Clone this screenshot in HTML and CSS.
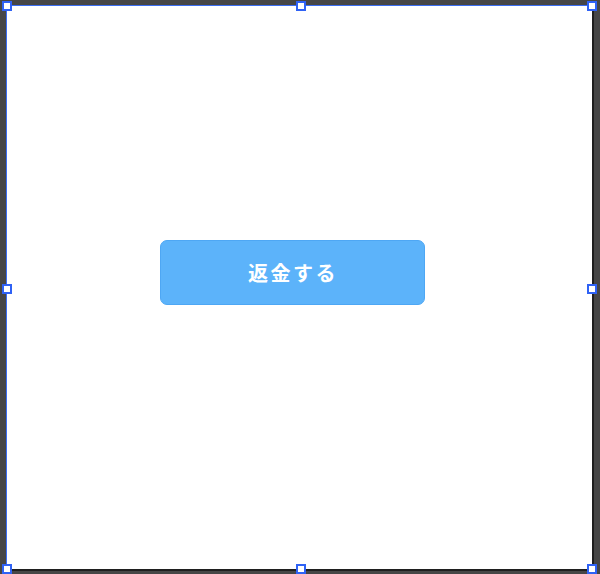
FILE: index.html
```html
<!DOCTYPE html>
<html lang="ja">
<head>
<meta charset="utf-8">
<title>返金する</title>
<link rel="stylesheet" href="styles.css">
</head>
<body>
<div class="stage">
  <div class="canvas">
    <button class="refund-btn" type="button">返金する</button>
    <span class="handle h-tl"></span>
    <span class="handle h-tm"></span>
    <span class="handle h-tr"></span>
    <span class="handle h-ml"></span>
    <span class="handle h-mr"></span>
    <span class="handle h-bl"></span>
    <span class="handle h-bm"></span>
    <span class="handle h-br"></span>
  </div>
</div>
</body>
</html>
```

FILE: styles.css
```css
html, body {
  margin: 0;
  padding: 0;
  background: #464646;
  width: 600px;
  height: 574px;
  overflow: hidden;
}

.stage {
  padding: 5px 0 0 6px;
}

.canvas {
  position: relative;
  box-sizing: border-box;
  width: 586px;
  height: 564px;
  background: #ffffff;
  border-left: 1px solid #3a6df2;
  border-top: 1px solid #3a6df2;
  box-shadow: 2px 2px 0 #1f1f1f;
  padding: 234px 0 0 153px;
}

.refund-btn {
  box-sizing: border-box;
  display: flex;
  align-items: center;
  justify-content: center;
  width: 265px;
  height: 65px;
  margin: 0;
  padding: 0 0 0 1px;
  background: #5cb3fa;
  border: 1px solid #4ea7f4;
  border-radius: 7px;
  color: #ffffff;
  font-family: "Noto Sans CJK JP", "Noto Sans", sans-serif;
  font-size: 20px;
  font-weight: 700;
  letter-spacing: 2.5px;
  line-height: 1;
}

.handle {
  position: absolute;
  box-sizing: border-box;
  width: 10px;
  height: 10px;
  background: #ffffff;
  border: 2px solid #2f62f5;
}

.h-tl { left: -5px; top: -5px; }
.h-tm { left: 289px; top: -5px; }
.h-tr { right: -5px; top: -5px; }
.h-ml { left: -5px; top: 278px; }
.h-mr { right: -5px; top: 278px; }
.h-bl { left: -5px; bottom: -5px; }
.h-bm { left: 289px; bottom: -5px; }
.h-br { right: -5px; bottom: -5px; }
```
